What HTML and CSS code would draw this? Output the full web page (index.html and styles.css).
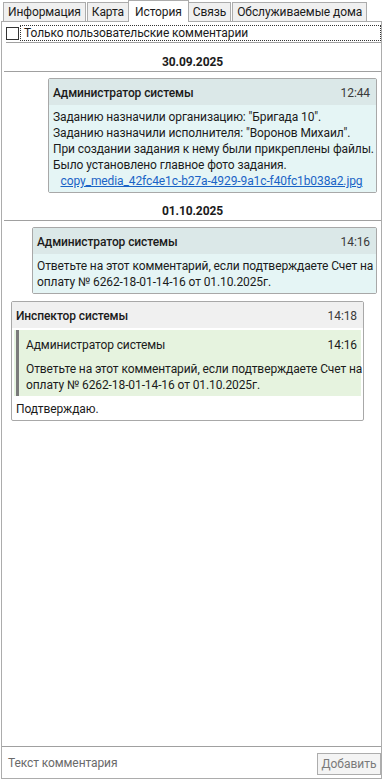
FILE: index.html
```html
<!DOCTYPE html>
<html lang="ru">
<head>
<meta charset="utf-8">
<link rel="stylesheet" href="styles.css">
</head>
<body>
<div class="app">
  <div class="tabs">
    <div class="tab">Информация</div>
    <div class="tab">Карта</div>
    <div class="tab active">История</div>
    <div class="tab">Связь</div>
    <div class="tab">Обслуживаемые дома</div>
  </div>
  <div class="panel">
    <div class="filter">
      <span class="checkbox"></span>
      <span class="focus">Только пользовательские комментарии</span>
    </div>
    <div class="sep"></div>
    <div class="history">
      <div class="date">30.09.2025</div>
      <div class="card sys card1">
        <div class="card-head"><span class="author">Администратор системы</span><span class="time">12:44</span></div>
        <div class="card-body">
          <div>Заданию назначили организацию: "Бригада 10".</div>
          <div>Заданию назначили исполнителя: "Воронов Михаил".</div>
          <div>При создании задания к нему были прикреплены файлы.</div>
          <div>Было установлено главное фото задания.</div>
          <div class="link-row"><a class="link">copy_media_42fc4e1c-b27a-4929-9a1c-f40fc1b038a2.jpg</a></div>
        </div>
      </div>
      <div class="date next">01.10.2025</div>
      <div class="card sys card2">
        <div class="card-head"><span class="author">Администратор системы</span><span class="time">14:16</span></div>
        <div class="card-body">
          <div>Ответьте на этот комментарий, если подтверждаете Счет на<br>оплату № 6262-18-01-14-16 от 01.10.2025г.</div>
        </div>
      </div>
      <div class="card own card3">
        <div class="card-head"><span class="author">Инспектор системы</span><span class="time">14:18</span></div>
        <div class="quote">
          <div class="quote-head"><span>Администратор системы</span><span>14:16</span></div>
          <div class="quote-body">Ответьте на этот комментарий, если подтверждаете Счет на<br>оплату № 6262-18-01-14-16 от 01.10.2025г.</div>
        </div>
        <div class="own-body">Подтверждаю.</div>
      </div>
    </div>
    <div class="composer">
      <span class="placeholder">Текст комментария</span>
      <button class="add" disabled>Добавить</button>
    </div>
  </div>
</div>
</body>
</html>
```
FILE: styles.css
```css
html, body {
  margin: 0;
  padding: 0;
  background: #ffffff;
}
body {
  font-family: Roboto, "Noto Sans", sans-serif;
  font-size: 12px;
  letter-spacing: -0.1px;
  color: #1b1b1b;
}
.app {
  width: 381px;
  height: 779px;
  margin-left: 1px;
  display: flex;
  flex-direction: column;
}
.tabs {
  display: flex;
  align-items: flex-end;
  height: 21px;
  padding-left: 2px;
  position: relative;
  z-index: 2;
}
.tab {
  height: 19px;
  box-sizing: border-box;
  border: 1px solid #acacac;
  border-bottom: none;
  background: #f0f0f0;
  padding: 0 4px;
  line-height: 19px;
  margin-right: 1px;
  white-space: nowrap;
}
.tab.active {
  height: 22px;
  margin-bottom: -1px;
  background: #ffffff;
  line-height: 22px;
  padding: 0 6px;
  margin-left: -2px;
  margin-right: -1px;
}
.panel {
  flex: 1;
  border: 1px solid #acacac;
  display: flex;
  flex-direction: column;
  min-height: 0;
}
.filter {
  display: flex;
  align-items: center;
  height: 16px;
  margin: 3px 0 0 4px;
}
.checkbox {
  width: 11px;
  height: 11px;
  border: 1px solid #333333;
  background: #fff;
  flex: none;
}
.focus {
  flex: 1;
  margin-left: 1px;
  border: 1px dotted #333333;
  line-height: 14px;
  padding-left: 3px;
}
.sep {
  height: 1px;
  background: #a0a0a0;
  margin: 1px 0 0 4px;
}
.history {
  flex: 1;
  display: flex;
  flex-direction: column;
}
.date {
  text-align: center;
  font-weight: bold;
  line-height: 16px;
  padding-top: 11px;
  padding-bottom: 1px;
  border-bottom: 1px solid #a0a0a0;
  margin: 0 0 6px 2px;
}
.date.next { padding-top: 10px; }
.card {
  border: 1px solid #a8a8a8;
  border-radius: 2px;
  white-space: nowrap;
}
.card1 { margin: 0 4px 0 46px; }
.card2 { margin: 0 4px 0 30px; }
.card3 { margin: 7px 17px 0 9px; }
.card-head {
  display: flex;
  justify-content: space-between;
  padding: 6px 6px 4px 4px;
  line-height: 16px;
}
.author { font-weight: 500; }
.time { color: #3a3a3a; }
.sys .card-head { background: #dbe8e8; }
.sys .card-body {
  background: #e5f5f5;
  padding: 4px 6px 3px 4px;
  line-height: 16px;
}
.link-row { text-align: center; }
.link {
  color: #1a63c6;
  text-decoration: underline;
}
.own .card-head { background: #f0f0f0; }
.quote {
  margin: 2px 2px 0 2px;
  background: #e6f3df;
  padding: 0 4px 0 2px;
  display: flex;
  flex-direction: column;
  line-height: 16px;
}
.quote-head, .quote-body {
  border-left: 3px solid #7a7a7a;
  padding-left: 7px;
}
.quote-head {
  display: flex;
  justify-content: space-between;
  padding-top: 7px;
  padding-bottom: 8px;
}
.quote-body {
  padding-bottom: 3px;
}
.own-body {
  padding: 5px 4px 3px 4px;
  line-height: 16px;
}
.composer {
  border-top: 1px solid #a0a0a0;
  display: flex;
  align-items: center;
  justify-content: space-between;
  height: 31px;
  padding: 0 0 0 6px;
}
.placeholder { color: #6a6a6a; }
.add {
  font: inherit;
  color: #7a7a7a;
  background: #f4f4f4;
  border: 1px solid #adadad;
  height: 22px;
  width: 64px;
  padding: 0;
  margin-top: 2px;
}
```
